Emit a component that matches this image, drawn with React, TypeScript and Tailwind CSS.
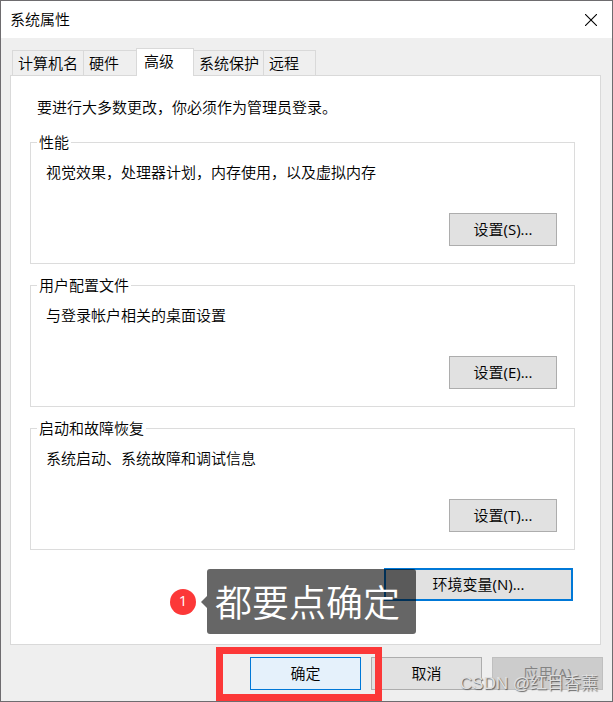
import { useState } from "react";

type Section = {
  title: string;
  description: string;
  hotkey: string;
};

const sections: Section[] = [
  {
    title: "性能",
    description: "视觉效果，处理器计划，内存使用，以及虚拟内存",
    hotkey: "S",
  },
  {
    title: "用户配置文件",
    description: "与登录帐户相关的桌面设置",
    hotkey: "E",
  },
  {
    title: "启动和故障恢复",
    description: "系统启动、系统故障和调试信息",
    hotkey: "T",
  },
];

const tabs = [
  { label: "计算机名", className: "w-[71px] border-l" },
  { label: "硬件", className: "w-[53px] border-l" },
  { label: "高级", className: "w-[58px] border-x" },
  { label: "系统保护", className: "w-[69px]" },
  { label: "远程", className: "w-[53px] border-x" },
];

function TitleBar() {
  return (
    <header className="flex h-[37px] items-center justify-between bg-white pl-[9px] pr-[15px]">
      <h1>系统属性</h1>
      <button type="button" aria-label="关闭">
        <svg width="12" height="12" viewBox="0 0 12 12" stroke="#000" fill="none">
          <path d="M0 0L12 12M12 0L0 12" strokeWidth="1.1" />
        </svg>
      </button>
    </header>
  );
}

function SettingsGroup({ title, description, hotkey }: Section) {
  return (
    <fieldset className="border border-[#dcdcdc]">
      <legend className="ml-[6px] px-[2px]">{title}</legend>
      <div className="flex flex-col gap-[30px] pb-[17px] pl-[15px] pr-[17px] pt-[9px]">
        <p>{description}</p>
        <button
          type="button"
          className="h-[33px] w-[108px] self-end border border-[#adadad] bg-[#e1e1e1]"
        >
          设置<span className="font-normal">{`(${hotkey})...`}</span>
        </button>
      </div>
    </fieldset>
  );
}

function Callout() {
  return (
    <div className="pointer-events-none absolute right-[157px] top-px flex items-center whitespace-nowrap text-white">
      <span className="mr-[5px] flex size-[26px] items-center justify-center rounded-full bg-[#fc3838] pb-[3px] font-normal">
        1
      </span>
      <svg width="6" height="12" viewBox="0 0 6 12" fill="#000" fillOpacity="0.6">
        <path d="M6 0L0 6L6 12Z" />
      </svg>
      <span className="h-[65px] w-[209px] rounded-[3px] bg-black/60 pl-[8px] text-[37px] leading-[67px]">
        都要点确定
      </span>
    </div>
  );
}

export default function App() {
  const [active, setActive] = useState("高级");

  return (
    <div className="relative flex min-h-screen flex-col border border-[#6e6c6f] bg-[#efefef] font-['Open_Sans','Noto_Sans_CJK_SC',sans-serif] text-[15px] font-[350] leading-[21px] text-black">
      <TitleBar />

      <div role="tablist" className="flex items-end pl-[11px] pt-[10px]">
        {tabs.map((tab) => (
          <button
            key={tab.label}
            type="button"
            role="tab"
            aria-selected={tab.label === active}
            onClick={() => setActive(tab.label)}
            className={`whitespace-nowrap border-t border-[#d9d9d9] text-left ${tab.className} ${
              tab.label === active
                ? "relative -mb-px h-[28px] bg-white pb-[2px] pl-[7px]"
                : "h-[25px] pl-[5px]"
            }`}
          >
            {tab.label}
          </button>
        ))}
      </div>

      <main className="ml-[9px] mr-[11px] border border-[#d9d9d9] bg-white pb-[43px] pl-[19px] pr-[25px] pt-[21px]">
        <p className="mb-[14px] pl-[7px]">
          要进行大多数更改，你必须作为管理员登录。
        </p>
        <div className="flex flex-col gap-[11px]">
          {sections.map((section) => (
            <SettingsGroup key={section.title} {...section} />
          ))}
        </div>
        <div className="relative mr-[2px] mt-[18px] flex justify-end">
          <button
            type="button"
            className="h-[33px] w-[189px] border-2 border-[#0078d7] bg-[#e1e1e1]"
          >
            环境变量<span className="font-normal">(N)...</span>
          </button>
          <Callout />
        </div>
      </main>

      <footer className="flex justify-end gap-[10px] pb-[11px] pr-[9px] pt-[12px]">
        <div className="relative">
          <button
            type="button"
            className="h-[33px] w-[111px] border border-[#0078d7] bg-[#e5f1fb]"
          >
            确定
          </button>
          <div className="pointer-events-none absolute -left-[34px] -top-[10px] z-10 h-[54px] w-[166px] border-[7px] border-[#fc3838]" />
        </div>
        <button
          type="button"
          className="h-[33px] w-[111px] border border-[#adadad] bg-[#e1e1e1]"
        >
          取消
        </button>
        <button
          type="button"
          disabled
          className="h-[33px] w-[111px] border border-[#bfbfbf] bg-[#cccccc] text-[#838383]"
        >
          应用<span className="font-normal">(A)</span>
        </button>
      </footer>

      <span className="pointer-events-none absolute bottom-[7px] right-[14px] font-['Liberation_Sans','Noto_Sans_CJK_SC',sans-serif] text-[17px] text-[#e0e0e0] [text-shadow:1px_1px_1px_#606060]">
        CSDN @红目香薰
      </span>
    </div>
  );
}
